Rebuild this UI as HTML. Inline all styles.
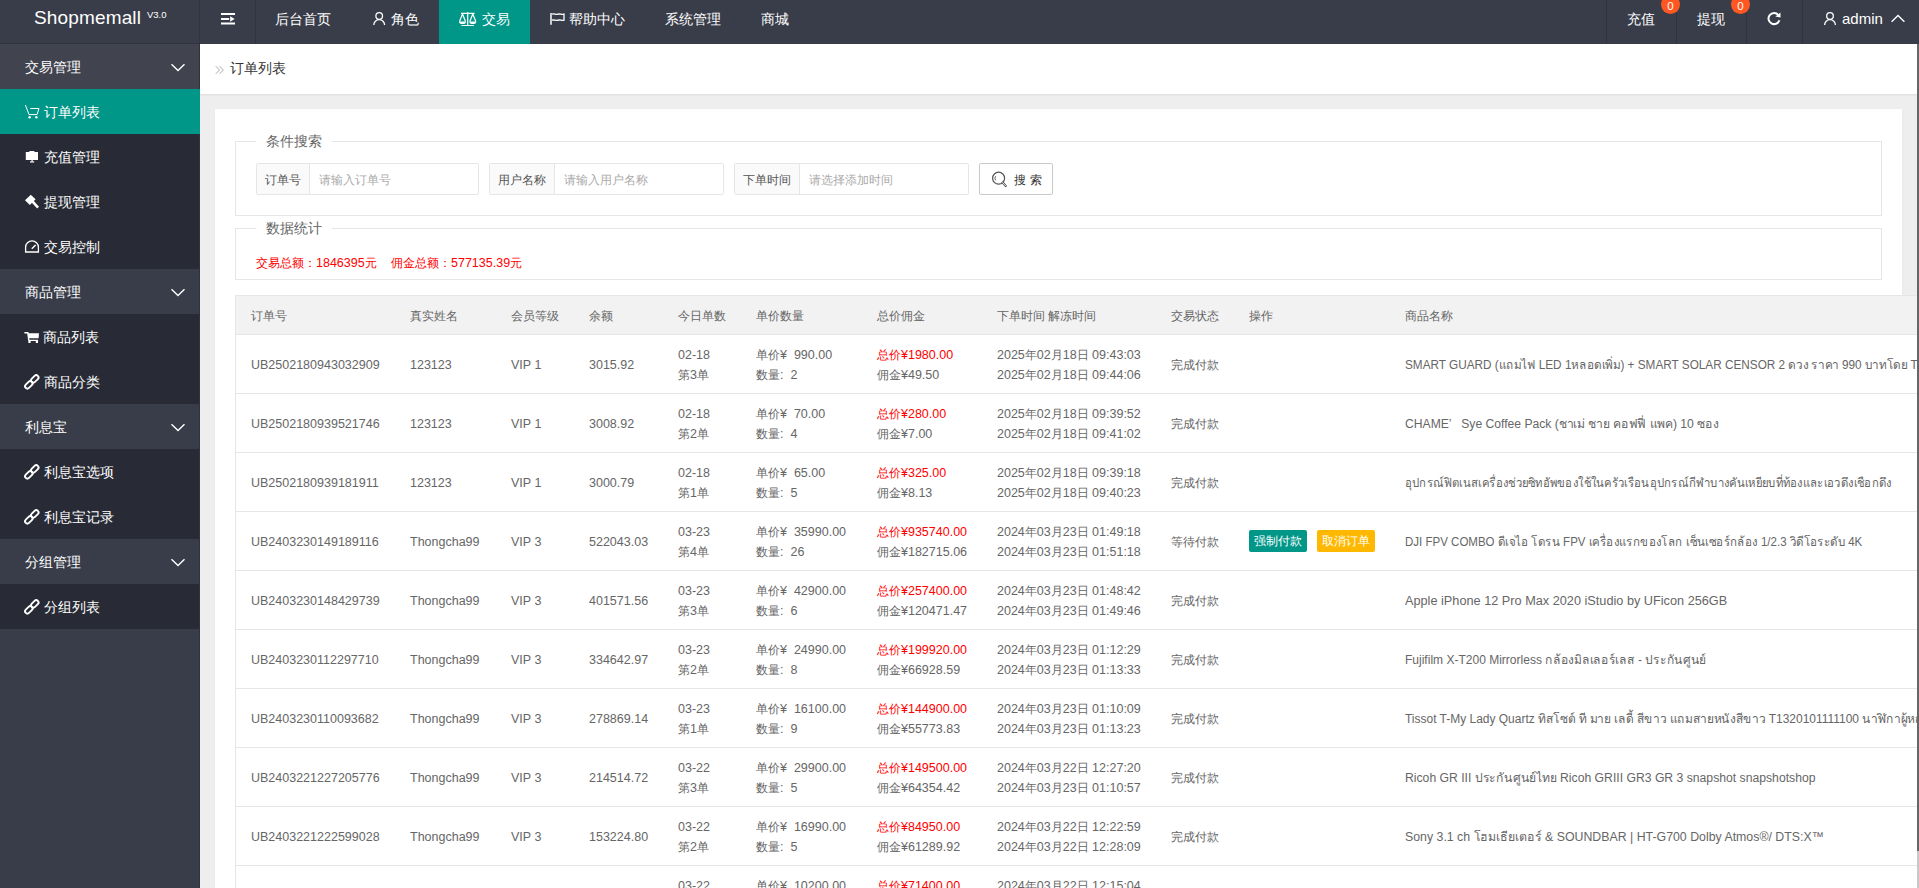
<!DOCTYPE html>
<html><head><meta charset="utf-8">
<style>
*{margin:0;padding:0;box-sizing:border-box}
html,body{width:1919px;height:888px;overflow:hidden;background:#eee;font-family:"Liberation Sans",sans-serif;font-size:14px;color:#666}
.abs{position:absolute}
.hdr{position:absolute;left:0;top:0;width:1919px;height:44px;background:#393D49;color:#fff}
.hdr .t{position:absolute;top:0;line-height:38px;font-size:14px;white-space:nowrap}
.sep{position:absolute;top:0;width:1px;height:44px;background:#30333f}
.side{position:absolute;left:0;top:44px;width:200px;height:844px;background:#393D49;color:#fff}
.grp{position:absolute;left:0;width:200px;height:45px;background:#393D49;line-height:47px;padding-left:25px}
.sub{position:absolute;left:0;width:200px;height:45px;line-height:47px;padding-left:25px}
.dk{position:absolute;left:0;width:199px;background:#282b35}
.main{position:absolute;left:200px;top:44px;width:1717px;height:844px;background:#eee;overflow:hidden}
.bc{position:absolute;left:0;top:0;width:1717px;height:50px;background:#fff;box-shadow:0 1px 2px rgba(0,0,0,.08)}
.card{position:absolute;left:15px;top:65px;width:1687px;height:800px;background:#fff;box-shadow:0 1px 2px 0 rgba(0,0,0,.06)}
.fs{position:absolute;border:1px solid #e6e6e6}
.lg{position:absolute;background:#fff;padding:0 10px;font-size:14px;color:#666;line-height:20px}
.ig{position:absolute;height:32px;border:1px solid #e6e6e6;border-radius:2px;background:#fff}
.ig .l{position:absolute;left:0;top:0;height:30px;background:#fafafa;border-right:1px solid #e6e6e6;line-height:32px;text-align:center;color:#555;font-size:12px}
.ig .p{position:absolute;top:0;line-height:32px;color:#aaa;font-size:12px}
.tbl{position:absolute;left:20px;top:186px;width:1800px}
.th{position:absolute;left:0;top:0;width:1800px;height:40px;background:#f2f2f2;border:1px solid #e6e6e6;border-right:0}
.row{position:absolute;left:0;width:1800px;height:59px;border-bottom:1px solid #e6e6e6;border-left:1px solid #e6e6e6}
.c{position:absolute;white-space:nowrap;font-size:12.5px;line-height:20px;color:#666}
.k{font-size:12px}
.red{color:#f00}
.badge{position:absolute;top:-5px;width:19px;height:19px;border-radius:50%;background:#FF5722;color:#fff;font-size:11.5px;line-height:22px;text-align:center}
.sbtn{position:absolute;border:1px solid #c9c9c9;border-radius:2px;background:#fff}
.tb{position:absolute;left:235px;top:295px;width:1682px;height:593px;overflow:hidden;background:#fff}
.hl{position:absolute;left:0;width:1682px;height:1px;background:#e6e6e6}
.btn{position:absolute;height:22px;width:58px;line-height:22px;color:#fff;font-size:12px;text-align:center;border-radius:2px}
</style></head><body>
<div class="hdr">
  <div class="t" style="left:34px;top:-1px;font-size:19px;letter-spacing:0.15px">Shopmemall</div>
  <div class="t" style="left:147px;top:-4px;font-size:9.5px">V3.0</div>
  <div class="sep" style="left:199px"></div>
  <div class="sep" style="left:255px"></div>
  <svg class="abs" style="left:0;top:0" width="1919" height="44" viewBox="0 0 1919 44">
    <g fill="#fff">
      <rect x="221" y="13" width="14" height="2"/><rect x="221" y="18" width="8.2" height="2"/><rect x="221" y="22.5" width="14" height="2"/>
      <path d="M230.2 16.3L234.6 19L230.2 21.7Z"/>
    </g>
    <g fill="none" stroke="#fff" stroke-width="1.3">
      <circle cx="379.2" cy="16" r="3.3"/><path d="M373.8 25a5.4 5.4 0 0 1 10.8 0"/>
      <circle cx="1830" cy="16" r="3.3"/><path d="M1824.6 25a5.4 5.4 0 0 1 10.8 0"/>
      <path d="M1891.6 21.8L1898 15.4L1904.4 21.8" stroke-width="1.4"/>
      <path d="M551 13v11.8" stroke-width="1.5"/><path d="M552 14.2c2-1 4 .8 6 0 2-.8 4 .8 6 0v6c-2 .8-4-.8-6 0-2 .8-4-.8-6 0"/>
    </g>
  </svg>
  <div class="t" style="left:275px">后台首页</div>
  <div class="t" style="left:391px">角色</div>
  <div class="abs" style="left:439px;top:0;width:91px;height:44px;background:#009688"></div>
  <svg class="abs" style="left:439px;top:0" width="91" height="44" viewBox="439 0 91 44">
    <g fill="none" stroke="#fff" stroke-width="1.2">
      <path d="M461 13.3h13.5M467.7 13v12.5M461.4 25.5h12.5"/>
      <path d="M462.5 14l-3 7.5M462.5 14l3 7.5M472.8 14l-3 7.5M472.8 14l3 7.5"/>
    </g>
    <g fill="#fff"><path d="M459 21.5h7a3.5 2.6 0 0 1 -7 0z"/><path d="M469.3 21.5h7a3.5 2.6 0 0 1 -7 0z"/><circle cx="467.7" cy="13.2" r="1"/></g>
  </svg>
  <div class="t" style="left:482px">交易</div>
  <div class="t" style="left:569px">帮助中心</div>
  <div class="t" style="left:665px">系统管理</div>
  <div class="t" style="left:761px">商城</div>
  <div class="sep" style="left:1606px"></div>
  <div class="sep" style="left:1676px"></div>
  <div class="sep" style="left:1746px"></div>
  <div class="sep" style="left:1802px"></div>
  <div class="t" style="left:1627px">充值</div>
  <div class="badge" style="left:1661px">0</div>
  <div class="t" style="left:1697px">提现</div>
  <div class="badge" style="left:1731px">0</div>
  <svg class="abs" style="left:1760px;top:5px" width="28" height="28" viewBox="0 0 28 28">
    <path d="M18.3 9.8A5.6 5.6 0 1 0 19.4 15.3" fill="none" stroke="#fff" stroke-width="2"/>
    <path d="M15.3 11.4L20.4 7.6L20.6 12.6Z" fill="#fff"/>
  </svg>
  <div class="t" style="left:1842px;font-size:15px">admin</div>
</div>
<div class="side">
  <div class="abs" style="left:199px;top:0;width:1px;height:844px;background:#30333e"></div>
  <div class="grp" style="top:0;background:#41434f;width:199px">交易管理</div>
  <div class="abs" style="left:0;top:-1px;width:200px;height:1px;background:#30333e"></div>
  <div class="sub" style="top:45px;background:#009688;padding-left:44px">订单列表</div>
  <div class="dk" style="top:90px;height:135px"></div>
  <div class="sub" style="top:90px;padding-left:44px">充值管理</div>
  <div class="sub" style="top:135px;padding-left:44px">提现管理</div>
  <div class="sub" style="top:180px;padding-left:44px">交易控制</div>
  <div class="grp" style="top:225px;width:199px">商品管理</div>
  <div class="dk" style="top:270px;height:90px"></div>
  <div class="sub" style="top:270px;padding-left:43px">商品列表</div>
  <div class="sub" style="top:315px;padding-left:44px">商品分类</div>
  <div class="grp" style="top:360px;width:199px">利息宝</div>
  <div class="dk" style="top:405px;height:90px"></div>
  <div class="sub" style="top:405px;padding-left:44px">利息宝选项</div>
  <div class="sub" style="top:450px;padding-left:44px">利息宝记录</div>
  <div class="grp" style="top:495px;width:199px">分组管理</div>
  <div class="dk" style="top:540px;height:45px"></div>
  <div class="sub" style="top:540px;padding-left:44px">分组列表</div>
  <svg class="abs" style="left:0;top:-44px" width="200" height="700" viewBox="0 0 200 700">
    <g fill="none" stroke="#fff" stroke-width="1.4">
      <path d="M171.5 64.3L178 70.6L184.5 64.3"/><path d="M171.5 289.3L178 295.6L184.5 289.3"/><path d="M171.5 424.3L178 430.6L184.5 424.3"/><path d="M171.5 559.3L178 565.6L184.5 559.3"/>
    </g>
    <g fill="none" stroke="#fff" stroke-width="1">
      <path d="M25.4 105L29 114.6H37L39 108.5H30.2"/>
      <path d="M25.6 252V247.2A6.4 6.4 0 0 1 38.4 247.2V252Z" stroke-width="1.3"/>
      <path d="M31.8 248.8L35.6 245" stroke-width="1.5"/>
    </g><g transform="translate(31.8 381.9) rotate(-45)" fill="none" stroke="#fff" stroke-width="1.9"><rect x="-0.05" y="-2.3" width="8.6" height="4.6" rx="2.3"/><rect x="-8.55" y="-2.3" width="8.6" height="4.6" rx="2.3"/></g><g transform="translate(31.8 471.9) rotate(-45)" fill="none" stroke="#fff" stroke-width="1.9"><rect x="-0.05" y="-2.3" width="8.6" height="4.6" rx="2.3"/><rect x="-8.55" y="-2.3" width="8.6" height="4.6" rx="2.3"/></g><g transform="translate(31.8 516.9) rotate(-45)" fill="none" stroke="#fff" stroke-width="1.9"><rect x="-0.05" y="-2.3" width="8.6" height="4.6" rx="2.3"/><rect x="-8.55" y="-2.3" width="8.6" height="4.6" rx="2.3"/></g><g transform="translate(31.8 606.9) rotate(-45)" fill="none" stroke="#fff" stroke-width="1.9"><rect x="-0.05" y="-2.3" width="8.6" height="4.6" rx="2.3"/><rect x="-8.55" y="-2.3" width="8.6" height="4.6" rx="2.3"/></g>
    <g fill="#fff">
      <circle cx="29.6" cy="117.3" r="1.2"/><circle cx="36.4" cy="117.3" r="1.2"/>
      <rect x="25.8" y="152" width="12.2" height="8"/><rect x="29.4" y="151" width="5" height="1.5"/><rect x="31.5" y="160" width="1.2" height="1.6"/><rect x="30" y="161.3" width="4.2" height="1.2"/>
      <path d="M25 200.3L30.8 194.8L35.6 199.3L29.8 205Z"/><path d="M31.6 202.4L33.4 200.6L39 206.8L37.2 208.6Z"/>
      <path d="M24.4 332h3.8l.6 1.3h10.2l-.4 5H29.1l.4 1.4h8.6v1.4H28.2L27.2 333.5h-2.8z"/><rect x="28.4" y="341" width="2.2" height="2"/><rect x="35.8" y="341" width="2.2" height="2"/>
    </g>
  </svg>
</div>
<div class="main">
  <div class="bc"><svg class="abs" style="left:14px;top:20px" width="12" height="12" viewBox="0 0 12 12"><path d="M1.8 2.2L5.5 6L1.8 9.8M5.6 2.2L9.3 6L5.6 9.8" fill="none" stroke="#aaa" stroke-width="1"/></svg><div class="c" style="left:30px;top:14px;font-size:14px;color:#333">订单列表</div></div>
  <div class="card">
    <div class="fs" style="left:20px;top:32px;width:1647px;height:75px"></div>
    <div class="lg" style="left:41px;top:22px">条件搜索</div>
    <div class="ig" style="left:41px;top:54px;width:223px;height:32px"><div class="l" style="width:53px">订单号</div><div class="p" style="left:62px">请输入订单号</div></div>
    <div class="ig" style="left:274px;top:54px;width:235px;height:32px"><div class="l" style="width:65px">用户名称</div><div class="p" style="left:74px">请输入用户名称</div></div>
    <div class="ig" style="left:519px;top:54px;width:235px;height:32px"><div class="l" style="width:65px">下单时间</div><div class="p" style="left:74px">请选择添加时间</div></div>
    <div class="sbtn" style="left:764px;top:54px;width:74px;height:32px"><svg class="abs" style="left:10px;top:6px" width="20" height="20" viewBox="0 0 20 20"><circle cx="8.6" cy="8.2" r="6" fill="none" stroke="#555" stroke-width="1.2"/><path d="M5.6 6.2a3.5 3.5 0 0 0 0 4" fill="none" stroke="#555" stroke-width="0.9"/><path d="M12.6 12.6l3.2 3.4" stroke="#555" stroke-width="2.2" stroke-linecap="round"/><path d="M12.6 12.6l3.2 3.4" stroke="#fff" stroke-width="0.8" stroke-linecap="round"/></svg><div class="abs" style="left:34px;top:0;line-height:32px;font-size:12px;color:#333;letter-spacing:4px">搜索</div></div>

    <div class="fs" style="left:20px;top:119px;width:1647px;height:52px"></div>
    <div class="lg" style="left:41px;top:109px">数据统计</div>
    <div class="c red" style="left:41px;top:144px"><span class="k">交易总额：</span>1846395<span class="k">元</span></div><div class="c red" style="left:176px;top:144px"><span class="k">佣金总额：</span>577135.39<span class="k">元</span></div>
  </div>
</div>
<!--TABLE-->
<div class="tb">
<div class="abs" style="left:0;top:0;width:1682px;height:39px;background:#f2f2f2"></div>
<div class="hl" style="top:0px"></div>
<div class="hl" style="top:39px"></div>
<div class="hl" style="top:98px"></div>
<div class="hl" style="top:157px"></div>
<div class="hl" style="top:216px"></div>
<div class="hl" style="top:275px"></div>
<div class="hl" style="top:334px"></div>
<div class="hl" style="top:393px"></div>
<div class="hl" style="top:452px"></div>
<div class="hl" style="top:511px"></div>
<div class="hl" style="top:570px"></div>
<div class="abs" style="left:0;top:0;width:1px;height:593px;background:#e6e6e6"></div>
<div class="c" style="left:16px;top:11px"><span class="k">订单号</span></div>
<div class="c" style="left:175px;top:11px"><span class="k">真实姓名</span></div>
<div class="c" style="left:276px;top:11px"><span class="k">会员等级</span></div>
<div class="c" style="left:354px;top:11px"><span class="k">余额</span></div>
<div class="c" style="left:443px;top:11px"><span class="k">今日单数</span></div>
<div class="c" style="left:521px;top:11px"><span class="k">单价数量</span></div>
<div class="c" style="left:642px;top:11px"><span class="k">总价佣金</span></div>
<div class="c" style="left:762px;top:11px"><span class="k">下单时间</span> <span class="k">解冻时间</span></div>
<div class="c" style="left:936px;top:11px"><span class="k">交易状态</span></div>
<div class="c" style="left:1014px;top:11px"><span class="k">操作</span></div>
<div class="c" style="left:1170px;top:11px"><span class="k">商品名称</span></div>
<div class="c" style="left:16px;top:60px">UB2502180943032909</div>
<div class="c" style="left:175px;top:60px">123123</div>
<div class="c" style="left:276px;top:60px">VIP 1</div>
<div class="c" style="left:354px;top:60px">3015.92</div>
<div class="c" style="left:443px;top:50px">02-18<br><span class="k">第</span>3<span class="k">单</span></div>
<div class="c" style="left:521px;top:50px"><span class="k">单价</span>¥ &nbsp;990.00<br><span class="k">数量</span>:<span style="padding-left:7px"></span>2</div>
<div class="c" style="left:642px;top:50px"><span class="red"><span class="k">总价</span>¥1980.00</span><br><span class="k">佣金</span>¥49.50</div>
<div class="c" style="left:762px;top:50px">2025<span class="k">年</span>02<span class="k">月</span>18<span class="k">日</span> 09:43:03<br>2025<span class="k">年</span>02<span class="k">月</span>18<span class="k">日</span> 09:44:06</div>
<div class="c" style="left:936px;top:60px"><span class="k">完成付款</span></div>
<div class="c pn" id="pn0" style="left:1170px;top:60px;transform:scaleX(0.9416);transform-origin:0 0">SMART GUARD (แถมไฟ LED 1หลอดเพิ่ม) + SMART SOLAR CENSOR 2 ดวง ราคา 990 บาทโดย TOPFLY</div>
<div class="c" style="left:16px;top:119px">UB2502180939521746</div>
<div class="c" style="left:175px;top:119px">123123</div>
<div class="c" style="left:276px;top:119px">VIP 1</div>
<div class="c" style="left:354px;top:119px">3008.92</div>
<div class="c" style="left:443px;top:109px">02-18<br><span class="k">第</span>2<span class="k">单</span></div>
<div class="c" style="left:521px;top:109px"><span class="k">单价</span>¥ &nbsp;70.00<br><span class="k">数量</span>:<span style="padding-left:7px"></span>4</div>
<div class="c" style="left:642px;top:109px"><span class="red"><span class="k">总价</span>¥280.00</span><br><span class="k">佣金</span>¥7.00</div>
<div class="c" style="left:762px;top:109px">2025<span class="k">年</span>02<span class="k">月</span>18<span class="k">日</span> 09:39:52<br>2025<span class="k">年</span>02<span class="k">月</span>18<span class="k">日</span> 09:41:02</div>
<div class="c" style="left:936px;top:119px"><span class="k">完成付款</span></div>
<div class="c pn" id="pn1" style="left:1170px;top:119px;transform:scaleX(0.9714);transform-origin:0 0">CHAME’ &nbsp; Sye Coffee Pack (ชาเม่ ชาย คอฟฟี่ แพค) 10 ซอง</div>
<div class="c" style="left:16px;top:178px">UB2502180939181911</div>
<div class="c" style="left:175px;top:178px">123123</div>
<div class="c" style="left:276px;top:178px">VIP 1</div>
<div class="c" style="left:354px;top:178px">3000.79</div>
<div class="c" style="left:443px;top:168px">02-18<br><span class="k">第</span>1<span class="k">单</span></div>
<div class="c" style="left:521px;top:168px"><span class="k">单价</span>¥ &nbsp;65.00<br><span class="k">数量</span>:<span style="padding-left:7px"></span>5</div>
<div class="c" style="left:642px;top:168px"><span class="red"><span class="k">总价</span>¥325.00</span><br><span class="k">佣金</span>¥8.13</div>
<div class="c" style="left:762px;top:168px">2025<span class="k">年</span>02<span class="k">月</span>18<span class="k">日</span> 09:39:18<br>2025<span class="k">年</span>02<span class="k">月</span>18<span class="k">日</span> 09:40:23</div>
<div class="c" style="left:936px;top:178px"><span class="k">完成付款</span></div>
<div class="c pn" id="pn2" style="left:1170px;top:178px;transform:scaleX(0.9061);transform-origin:0 0">อุปกรณ์ฟิตเนสเครื่องช่วยซิทอัพของใช้ในครัวเรือนอุปกรณ์กีฬาบางคันเหยียบที่ท้องและเอวดึงเชือกดึง</div>
<div class="c" style="left:16px;top:237px">UB2403230149189116</div>
<div class="c" style="left:175px;top:237px">Thongcha99</div>
<div class="c" style="left:276px;top:237px">VIP 3</div>
<div class="c" style="left:354px;top:237px">522043.03</div>
<div class="c" style="left:443px;top:227px">03-23<br><span class="k">第</span>4<span class="k">单</span></div>
<div class="c" style="left:521px;top:227px"><span class="k">单价</span>¥ &nbsp;35990.00<br><span class="k">数量</span>:<span style="padding-left:7px"></span>26</div>
<div class="c" style="left:642px;top:227px"><span class="red"><span class="k">总价</span>¥935740.00</span><br><span class="k">佣金</span>¥182715.06</div>
<div class="c" style="left:762px;top:227px">2024<span class="k">年</span>03<span class="k">月</span>23<span class="k">日</span> 01:49:18<br>2024<span class="k">年</span>03<span class="k">月</span>23<span class="k">日</span> 01:51:18</div>
<div class="c" style="left:936px;top:237px"><span class="k">等待付款</span></div>
<div class="btn" style="left:1014px;top:235px;background:#009688">强制付款</div>
<div class="btn" style="left:1082px;top:235px;background:#FFB800">取消订单</div>
<div class="c pn" id="pn3" style="left:1170px;top:237px;transform:scaleX(0.9212);transform-origin:0 0">DJI FPV COMBO ดีเจไอ โดรน FPV เครื่องแรกของโลก เซ็นเซอร์กล้อง 1/2.3 วิดีโอระดับ 4K</div>
<div class="c" style="left:16px;top:296px">UB2403230148429739</div>
<div class="c" style="left:175px;top:296px">Thongcha99</div>
<div class="c" style="left:276px;top:296px">VIP 3</div>
<div class="c" style="left:354px;top:296px">401571.56</div>
<div class="c" style="left:443px;top:286px">03-23<br><span class="k">第</span>3<span class="k">单</span></div>
<div class="c" style="left:521px;top:286px"><span class="k">单价</span>¥ &nbsp;42900.00<br><span class="k">数量</span>:<span style="padding-left:7px"></span>6</div>
<div class="c" style="left:642px;top:286px"><span class="red"><span class="k">总价</span>¥257400.00</span><br><span class="k">佣金</span>¥120471.47</div>
<div class="c" style="left:762px;top:286px">2024<span class="k">年</span>03<span class="k">月</span>23<span class="k">日</span> 01:48:42<br>2024<span class="k">年</span>03<span class="k">月</span>23<span class="k">日</span> 01:49:46</div>
<div class="c" style="left:936px;top:296px"><span class="k">完成付款</span></div>
<div class="c pn" id="pn4" style="left:1170px;top:296px;transform:scaleX(1.0169);transform-origin:0 0">Apple iPhone 12 Pro Max 2020 iStudio by UFicon 256GB</div>
<div class="c" style="left:16px;top:355px">UB2403230112297710</div>
<div class="c" style="left:175px;top:355px">Thongcha99</div>
<div class="c" style="left:276px;top:355px">VIP 3</div>
<div class="c" style="left:354px;top:355px">334642.97</div>
<div class="c" style="left:443px;top:345px">03-23<br><span class="k">第</span>2<span class="k">单</span></div>
<div class="c" style="left:521px;top:345px"><span class="k">单价</span>¥ &nbsp;24990.00<br><span class="k">数量</span>:<span style="padding-left:7px"></span>8</div>
<div class="c" style="left:642px;top:345px"><span class="red"><span class="k">总价</span>¥199920.00</span><br><span class="k">佣金</span>¥66928.59</div>
<div class="c" style="left:762px;top:345px">2024<span class="k">年</span>03<span class="k">月</span>23<span class="k">日</span> 01:12:29<br>2024<span class="k">年</span>03<span class="k">月</span>23<span class="k">日</span> 01:13:33</div>
<div class="c" style="left:936px;top:355px"><span class="k">完成付款</span></div>
<div class="c pn" id="pn5" style="left:1170px;top:355px;transform:scaleX(0.9618);transform-origin:0 0">Fujifilm X-T200 Mirrorless กล้องมิลเลอร์เลส - ประกันศูนย์</div>
<div class="c" style="left:16px;top:414px">UB2403230110093682</div>
<div class="c" style="left:175px;top:414px">Thongcha99</div>
<div class="c" style="left:276px;top:414px">VIP 3</div>
<div class="c" style="left:354px;top:414px">278869.14</div>
<div class="c" style="left:443px;top:404px">03-23<br><span class="k">第</span>1<span class="k">单</span></div>
<div class="c" style="left:521px;top:404px"><span class="k">单价</span>¥ &nbsp;16100.00<br><span class="k">数量</span>:<span style="padding-left:7px"></span>9</div>
<div class="c" style="left:642px;top:404px"><span class="red"><span class="k">总价</span>¥144900.00</span><br><span class="k">佣金</span>¥55773.83</div>
<div class="c" style="left:762px;top:404px">2024<span class="k">年</span>03<span class="k">月</span>23<span class="k">日</span> 01:10:09<br>2024<span class="k">年</span>03<span class="k">月</span>23<span class="k">日</span> 01:13:23</div>
<div class="c" style="left:936px;top:414px"><span class="k">完成付款</span></div>
<div class="c pn" id="pn6" style="left:1170px;top:414px;transform:scaleX(0.9577);transform-origin:0 0">Tissot T-My Lady Quartz ทิสโซต์ ที มาย เลดี้ สีขาว แถมสายหนังสีขาว T1320101111100 นาฬิกาผู้หญิง</div>
<div class="c" style="left:16px;top:473px">UB2403221227205776</div>
<div class="c" style="left:175px;top:473px">Thongcha99</div>
<div class="c" style="left:276px;top:473px">VIP 3</div>
<div class="c" style="left:354px;top:473px">214514.72</div>
<div class="c" style="left:443px;top:463px">03-22<br><span class="k">第</span>3<span class="k">单</span></div>
<div class="c" style="left:521px;top:463px"><span class="k">单价</span>¥ &nbsp;29900.00<br><span class="k">数量</span>:<span style="padding-left:7px"></span>5</div>
<div class="c" style="left:642px;top:463px"><span class="red"><span class="k">总价</span>¥149500.00</span><br><span class="k">佣金</span>¥64354.42</div>
<div class="c" style="left:762px;top:463px">2024<span class="k">年</span>03<span class="k">月</span>22<span class="k">日</span> 12:27:20<br>2024<span class="k">年</span>03<span class="k">月</span>23<span class="k">日</span> 01:10:57</div>
<div class="c" style="left:936px;top:473px"><span class="k">完成付款</span></div>
<div class="c pn" id="pn7" style="left:1170px;top:473px;transform:scaleX(0.9751);transform-origin:0 0">Ricoh GR III ประกันศูนย์ไทย Ricoh GRIII GR3 GR 3 snapshot snapshotshop</div>
<div class="c" style="left:16px;top:532px">UB2403221222599028</div>
<div class="c" style="left:175px;top:532px">Thongcha99</div>
<div class="c" style="left:276px;top:532px">VIP 3</div>
<div class="c" style="left:354px;top:532px">153224.80</div>
<div class="c" style="left:443px;top:522px">03-22<br><span class="k">第</span>2<span class="k">单</span></div>
<div class="c" style="left:521px;top:522px"><span class="k">单价</span>¥ &nbsp;16990.00<br><span class="k">数量</span>:<span style="padding-left:7px"></span>5</div>
<div class="c" style="left:642px;top:522px"><span class="red"><span class="k">总价</span>¥84950.00</span><br><span class="k">佣金</span>¥61289.92</div>
<div class="c" style="left:762px;top:522px">2024<span class="k">年</span>03<span class="k">月</span>22<span class="k">日</span> 12:22:59<br>2024<span class="k">年</span>03<span class="k">月</span>22<span class="k">日</span> 12:28:09</div>
<div class="c" style="left:936px;top:532px"><span class="k">完成付款</span></div>
<div class="c pn" id="pn8" style="left:1170px;top:532px;transform:scaleX(0.9867);transform-origin:0 0">Sony 3.1 ch โฮมเธียเตอร์ &amp; SOUNDBAR | HT-G700 Dolby Atmos®/ DTS:X™</div>
<div class="c" style="left:16px;top:591px">UB2403221215040000</div>
<div class="c" style="left:175px;top:591px">Thongcha99</div>
<div class="c" style="left:276px;top:591px">VIP 3</div>
<div class="c" style="left:354px;top:591px">150000.00</div>
<div class="c" style="left:443px;top:581px">03-22<br><span class="k">第</span>1<span class="k">单</span></div>
<div class="c" style="left:521px;top:581px"><span class="k">单价</span>¥ &nbsp;10200.00<br><span class="k">数量</span>:<span style="padding-left:7px"></span>7</div>
<div class="c" style="left:642px;top:581px"><span class="red"><span class="k">总价</span>¥71400.00</span><br><span class="k">佣金</span>¥60000.00</div>
<div class="c" style="left:762px;top:581px">2024<span class="k">年</span>03<span class="k">月</span>22<span class="k">日</span> 12:15:04<br>2024<span class="k">年</span>03<span class="k">月</span>22<span class="k">日</span> 12:20:00</div>
<div class="c" style="left:936px;top:591px"><span class="k">完成付款</span></div>
<div class="c pn" id="pn9" style="left:1170px;top:591px">Canon EOS</div>
</div>
<!--/TABLE-->
<div class="abs" style="left:1917px;top:44px;width:2px;height:807px;background:#666"></div>
<div class="abs" style="left:1917px;top:851px;width:2px;height:37px;background:#c8c8c8"></div>
</body></html>
